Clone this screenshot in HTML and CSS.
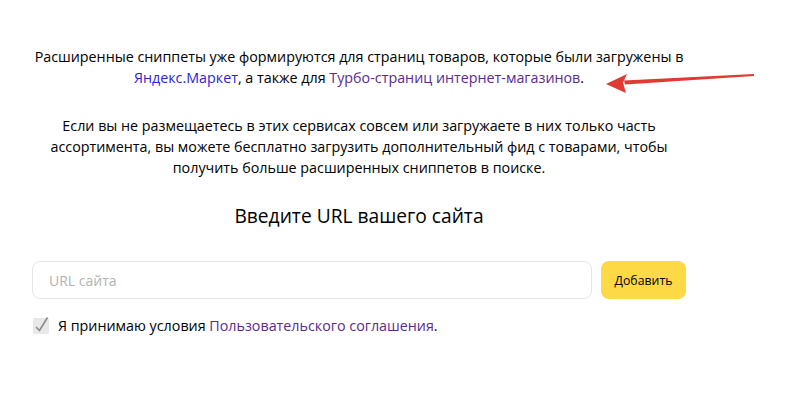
FILE: index.html
```html
<!DOCTYPE html>
<html lang="ru">
<head>
    <meta charset="UTF-8">
    <meta name="viewport" content="width=device-width, initial-scale=1.0">
    <title>Товарный фид</title>
    <link rel="stylesheet" href="styles.css">
</head>
<body>
    <div class="container">
        <p class="intro">
            Расширенные сниппеты уже формируются для страниц товаров, которые были загружены в
            <a href="#" class="link">Яндекс.Маркет</a>, а также для <a href="#" class="link visited">Турбо-страниц интернет-магазинов</a>.
            <svg class="arrow" width="160" height="30" viewBox="0 0 160 30">
                <path d="M152 7 L22 13.5 L23 17.5 L152 9 Z" fill="#e03b33"/>
                <path d="M4 17 L25 7 L21 15.5 L24 26 Z" fill="#e03b33"/>
            </svg>
        </p>

        <p class="text">
            Если вы не размещаетесь в этих сервисах совсем или загружаете в них только часть
            ассортимента, вы можете бесплатно загрузить дополнительный фид с товарами, чтобы
            получить больше расширенных сниппетов в поиске.
        </p>

        <h2>Введите URL вашего сайта</h2>

        <div class="form-row">
            <input type="text" placeholder="URL сайта">
            <button>Добавить</button>
        </div>

        <label class="agree">
            <span class="checkbox">
                <svg width="16" height="16" viewBox="0 0 16 16">
                    <path d="M3 9 L6.5 12.5 L14.5 -0.5" fill="none" stroke="#8a8a8a" stroke-width="1.6"/>
                </svg>
            </span>
            <span>Я принимаю условия <a href="#" class="link visited">Пользовательского соглашения</a>.</span>
        </label>
    </div>
</body>
</html>
```

FILE: styles.css
```css
body {
    margin: 0;
    font-family: "Open Sans", Arial, sans-serif;
    background: #fff;
    color: #000;
}
.container {
    width: 654px;
    margin-left: 32px;
    padding-top: 46px;
}
p {
    margin: 0;
    font-size: 14.3px;
    line-height: 21px;
    text-align: center;
}
.intro {
    position: relative;
}
.arrow {
    position: absolute;
    left: 570px;
    top: 21px;
}
.text {
    margin-top: 27px;
}
.link {
    color: #2b1fd6;
    text-decoration: none;
}
.link.visited {
    color: #5b2a91;
}
h2 {
    margin: 25px 0 0;
    font-size: 19.2px;
    font-weight: normal;
    text-align: center;
    line-height: 26px;
}
.form-row {
    display: flex;
    gap: 9px;
    margin-top: 32px;
}
input {
    flex: 1;
    height: 38px;
    box-sizing: border-box;
    border: 1px solid #e6e6e6;
    border-radius: 8px;
    padding: 0 16px;
    font-family: inherit;
    font-size: 14px;
    outline: none;
}
input::placeholder { color: #b3b3b3; }
button {
    width: 85px;
    height: 38px;
    background-color: #fdd945;
    border: none;
    border-radius: 8px;
    font-family: inherit;
    font-size: 12.3px;
    color: #000;
    cursor: pointer;
}
.agree {
    display: flex;
    align-items: center;
    gap: 9px;
    margin-top: 17px;
    margin-left: 1px;
    font-size: 14.3px;
}
.checkbox {
    width: 16px;
    height: 16px;
    background: #e8e8e8;
    border-radius: 2px;
    display: flex;
}
.checkbox svg {
    overflow: visible;
}
```
